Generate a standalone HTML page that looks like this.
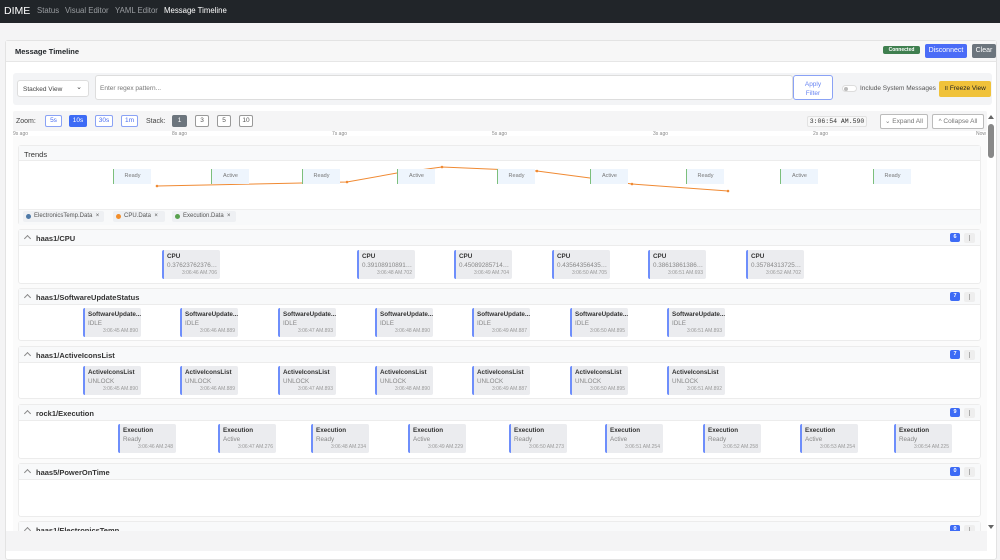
<!DOCTYPE html>
<html><head><meta charset="utf-8"><style>
*{box-sizing:border-box;margin:0;padding:0}
body{width:1000px;height:551px;overflow:hidden;background:#f4f4f5;font-family:"Liberation Sans",sans-serif;position:relative;color:#212529}
.a{position:absolute}
.nav{left:0;top:0;width:1000px;height:23px;background:#212529}
.nav span{position:absolute;top:6px;font-size:7.8px;color:#9a9da1;white-space:nowrap}
.card{left:5px;top:40px;width:992px;height:520px;background:#fff;border:1px solid #e3e3e3;border-radius:3px}
.btn{position:absolute;font-size:6.5px;border-radius:2px;text-align:center;white-space:nowrap}
.zb{height:12px;top:115px;border:1px solid #8aa2f5;color:#4a6cf0;line-height:10px;background:#fff}
.sb{height:12px;top:115px;border:1px solid #999;color:#555;line-height:10px;background:#fff}
.lbl{font-size:5px;color:#888;top:131px}
.sec{left:18px;width:963px;border:1px solid #ececec;border-radius:3px;background:#fff}
.sh{position:absolute;left:0;top:0;width:100%;height:16px;background:#f8f9fa;border-bottom:1px solid #ececec}
.sh b{position:absolute;left:17px;top:4px;font-size:7.5px;color:#333;font-weight:bold;white-space:nowrap}
.sh i{position:absolute;left:6px;top:6px;width:5px;height:5px;border-left:1px solid #888;border-top:1px solid #888;transform:rotate(45deg)}
.bd{position:absolute;right:20px;top:3px;width:10px;height:9px;background:#3d6bf5;border-radius:2px;color:#fff;font-size:5.5px;text-align:center;line-height:9px;font-weight:bold}
.mn{position:absolute;right:5px;top:3px;width:11px;height:10px;background:#eee;border-radius:2px}
.mn:after{content:"";position:absolute;left:5px;top:2px;width:1px;height:6px;background:#aaa}
.m{position:absolute;width:58px;height:29px;background:#ebecef;border-left:2px solid #6e8efb;border-radius:2px;font-size:6.3px;white-space:nowrap;overflow:hidden}
.m b{position:absolute;left:3px;top:3px;color:#333}
.m u{position:absolute;left:3px;top:12px;width:51px;overflow:hidden;text-overflow:ellipsis;color:#888;text-decoration:none}
.m s{position:absolute;right:3px;top:20px;color:#999;text-decoration:none;font-size:5px}
.tb{position:absolute;top:169px;width:38px;height:15px;background:#eef5fd;border-left:1px solid #7cbf7c;font-size:5.5px;color:#777;text-align:center;line-height:15px}
.chip{position:absolute;top:211px;height:11px;background:#eef0f3;border-radius:2px;font-size:6px;color:#555;line-height:11px;padding-left:11px;white-space:nowrap}
</style></head><body>
<div class="a nav"><span style="left:4px;top:5px;font-size:10.5px;color:#fff">DIME</span><span style="left:37px">Status</span><span style="left:65px">Visual Editor</span><span style="left:115px">YAML Editor</span><span style="left:164px;color:#fff">Message Timeline</span></div>
<div class="a card"></div>
<div class="a" style="left:6px;top:41px;width:990px;height:21px;background:#f7f7f7;border-bottom:1px solid #e6e6e6"></div>
<div class="a" style="left:15px;top:47px;font-size:7.5px;font-weight:bold">Message Timeline</div>
<div class="a" style="left:883px;top:46px;width:37px;height:8px;background:#3f7f4f;border-radius:2px;color:#fff;font-size:5px;font-weight:bold;text-align:center;line-height:8px">Connected</div>
<div class="btn" style="left:925px;top:44px;width:42px;height:14px;background:#4a6cf7;color:#fff;line-height:14px;font-size:7px">Disconnect</div>
<div class="btn" style="left:972px;top:44px;width:24px;height:14px;background:#6c757d;color:#fff;line-height:14px;font-size:7px">Clear</div>
<div class="a" style="left:13px;top:73px;width:979px;height:32px;background:#f3f4f6;border-radius:3px"></div>
<div class="a" style="left:17px;top:80px;width:72px;height:17px;background:#fff;border:1px solid #ddd;border-radius:3px;font-size:6.5px;padding:5px 0 0 5px;color:#444">Stacked View<span style="position:absolute;right:6px;top:2px;font-size:7px">⌄</span></div>
<div class="a" style="left:95px;top:75px;width:698px;height:25px;background:#fff;border:1px solid #ddd;border-radius:3px;font-size:6.5px;color:#777;padding:9px 0 0 4px">Enter regex pattern...</div>
<div class="a" style="left:793px;top:75px;width:40px;height:25px;background:#fff;border:1px solid #8aa2f5;border-radius:3px;font-size:6.5px;color:#6a86f2;text-align:center;padding-top:4px;line-height:9px">Apply<br>Filter</div>
<div class="a" style="left:842px;top:85px;width:15px;height:7px;border:1px solid #ddd;border-radius:4px;background:#fff"><div style="position:absolute;left:1px;top:1px;width:4px;height:4px;border-radius:50%;background:#bbb"></div></div>
<div class="a" style="left:860px;top:85px;font-size:6.5px;color:#555">Include System Messages</div>
<div class="btn" style="left:939px;top:81px;width:52px;height:16px;background:#f0c23a;color:#222;line-height:16px;font-size:6.5px">॥ Freeze View</div>
<div class="a" style="left:13px;top:111px;width:974px;height:20px;background:#f5f5f6;border-radius:2px"></div>
<div class="a" style="left:16px;top:118px;font-size:7px;color:#444">Zoom:</div>
<div class="btn zb" style="left:45px;width:17px">5s</div>
<div class="btn zb" style="left:69px;width:18px;background:#3d6bf5;color:#fff;border-color:#3d6bf5">10s</div>
<div class="btn zb" style="left:95px;width:18px">30s</div>
<div class="btn zb" style="left:121px;width:17px">1m</div>
<div class="a" style="left:146px;top:118px;font-size:7px;color:#444">Stack:</div>
<div class="btn sb" style="left:172px;width:15px;background:#6c757d;color:#fff;border-color:#6c757d">1</div>
<div class="btn sb" style="left:195px;width:14px">3</div>
<div class="btn sb" style="left:217px;width:14px">5</div>
<div class="btn sb" style="left:239px;width:14px">10</div>
<div class="a" style="left:807px;top:116px;width:60px;height:11px;background:#f8f8f8;border:1px solid #e2e2e2;border-radius:2px;font-family:'Liberation Mono',monospace;font-size:6.5px;text-align:center;line-height:10px;color:#333">3:06:54 AM.590</div>
<div class="btn sb" style="left:880px;top:114px;width:48px;height:15px;line-height:13px;color:#777;border-color:#bbb">⌄ Expand All</div>
<div class="btn sb" style="left:932px;top:114px;width:52px;height:15px;line-height:13px;color:#777;border-color:#bbb">^ Collapse All</div>
<div class="a" style="left:988px;top:115px;width:0;height:0;border-left:3px solid transparent;border-right:3px solid transparent;border-bottom:4px solid #666"></div>
<div class="a" style="left:988px;top:124px;width:6px;height:34px;background:#888;border-radius:3px"></div>
<div class="a" style="left:988px;top:525px;width:0;height:0;border-left:3px solid transparent;border-right:3px solid transparent;border-top:4px solid #666"></div>
<div class="a lbl" style="left:13px">9s ago</div><div class="a lbl" style="left:172px">8s ago</div><div class="a lbl" style="left:332px">7s ago</div><div class="a lbl" style="left:492px">5s ago</div><div class="a lbl" style="left:653px">3s ago</div><div class="a lbl" style="left:813px">2s ago</div><div class="a lbl" style="left:976px">Now</div>
<div class="a" style="left:13px;top:136px;width:974px;height:395px;background:#fbfbfb"></div>

<div class="a sec" style="top:145px;height:80px"><div class="sh" style="height:15px"><b style="left:5px;font-weight:normal;color:#333">Trends</b></div>
<div style="position:absolute;left:0;top:63px;width:100%;height:16px;background:#f8f9fa;border-top:1px solid #eee"></div></div>
<svg class="a" style="left:0;top:0" width="1000" height="230"><polyline points="157,186 302,183 347,182 397,173 442,167 537,171 590,178 632,184 728,191" fill="none" stroke="#f08a33" stroke-width="1"/><g fill="#f08a33"><circle cx="157" cy="186" r="1.3"/><circle cx="347" cy="182" r="1.3"/><circle cx="442" cy="167" r="1.3"/><circle cx="537" cy="171" r="1.3"/><circle cx="632" cy="184" r="1.3"/><circle cx="728" cy="191" r="1.3"/></g></svg>
<div class="tb" style="left:113px">Ready</div><div class="tb" style="left:211px">Active</div><div class="tb" style="left:302px">Ready</div><div class="tb" style="left:397px">Active</div><div class="tb" style="left:497px">Ready</div><div class="tb" style="left:590px">Active</div><div class="tb" style="left:686px">Ready</div><div class="tb" style="left:780px">Active</div><div class="tb" style="left:873px">Ready</div>
<div class="chip" style="left:23px;width:81px">ElectronicsTemp.Data&nbsp; ×</div>
<div class="chip" style="left:113px;width:52px">CPU.Data&nbsp; ×</div>
<div class="chip" style="left:172px;width:64px">Execution.Data&nbsp; ×</div>
<div class="a" style="left:26px;top:214px;width:5px;height:5px;border-radius:50%;background:#4e79a7"></div>
<div class="a" style="left:116px;top:214px;width:5px;height:5px;border-radius:50%;background:#f28e2b"></div>
<div class="a" style="left:175px;top:214px;width:5px;height:5px;border-radius:50%;background:#59a14f"></div>

<div class="a sec" style="top:229px;height:55px"><div class="sh"><i></i><b>haas1/CPU</b><div class="bd">6</div><div class="mn"></div></div></div>
<div class="a sec" style="top:288px;height:53px"><div class="sh"><i></i><b>haas1/SoftwareUpdateStatus</b><div class="bd">7</div><div class="mn"></div></div></div>
<div class="a sec" style="top:346px;height:53px"><div class="sh"><i></i><b>haas1/ActiveIconsList</b><div class="bd">7</div><div class="mn"></div></div></div>
<div class="a sec" style="top:404px;height:55px"><div class="sh"><i></i><b>rock1/Execution</b><div class="bd">9</div><div class="mn"></div></div></div>
<div class="a sec" style="top:463px;height:54px"><div class="sh"><i></i><b>haas5/PowerOnTime</b><div class="bd">0</div><div class="mn"></div></div></div>
<div class="a" style="left:18px;top:521px;width:963px;height:10px;overflow:hidden"><div class="sec" style="position:absolute;left:0;top:0;width:963px;height:30px;border:1px solid #ececec"><div class="sh"><i></i><b>haas1/ElectronicsTemp</b><div class="bd">0</div><div class="mn"></div></div></div></div>
<div class="a" style="left:6px;top:531px;width:981px;height:20px;background:#f4f4f5"></div>

<div class="m" style="left:162px;top:250px"><b>CPU</b><u>0.376237623762376</u><s>3:06:46 AM.706</s></div>
<div class="m" style="left:357px;top:250px"><b>CPU</b><u>0.391089108910891</u><s>3:06:48 AM.702</s></div>
<div class="m" style="left:454px;top:250px"><b>CPU</b><u>0.450892857142857</u><s>3:06:49 AM.704</s></div>
<div class="m" style="left:552px;top:250px"><b>CPU</b><u>0.435643564356435</u><s>3:06:50 AM.705</s></div>
<div class="m" style="left:648px;top:250px"><b>CPU</b><u>0.386138613861386</u><s>3:06:51 AM.693</s></div>
<div class="m" style="left:746px;top:250px"><b>CPU</b><u>0.357843137254901</u><s>3:06:52 AM.702</s></div>

<div class="m" style="left:83px;top:308px"><b>SoftwareUpdate...</b><u>IDLE</u><s>3:06:45 AM.890</s></div>
<div class="m" style="left:180px;top:308px"><b>SoftwareUpdate...</b><u>IDLE</u><s>3:06:46 AM.889</s></div>
<div class="m" style="left:278px;top:308px"><b>SoftwareUpdate...</b><u>IDLE</u><s>3:06:47 AM.893</s></div>
<div class="m" style="left:375px;top:308px"><b>SoftwareUpdate...</b><u>IDLE</u><s>3:06:48 AM.890</s></div>
<div class="m" style="left:472px;top:308px"><b>SoftwareUpdate...</b><u>IDLE</u><s>3:06:49 AM.887</s></div>
<div class="m" style="left:570px;top:308px"><b>SoftwareUpdate...</b><u>IDLE</u><s>3:06:50 AM.895</s></div>
<div class="m" style="left:667px;top:308px"><b>SoftwareUpdate...</b><u>IDLE</u><s>3:06:51 AM.893</s></div>

<div class="m" style="left:83px;top:366px"><b>ActiveIconsList</b><u>UNLOCK</u><s>3:06:45 AM.890</s></div>
<div class="m" style="left:180px;top:366px"><b>ActiveIconsList</b><u>UNLOCK</u><s>3:06:46 AM.889</s></div>
<div class="m" style="left:278px;top:366px"><b>ActiveIconsList</b><u>UNLOCK</u><s>3:06:47 AM.893</s></div>
<div class="m" style="left:375px;top:366px"><b>ActiveIconsList</b><u>UNLOCK</u><s>3:06:48 AM.890</s></div>
<div class="m" style="left:472px;top:366px"><b>ActiveIconsList</b><u>UNLOCK</u><s>3:06:49 AM.887</s></div>
<div class="m" style="left:570px;top:366px"><b>ActiveIconsList</b><u>UNLOCK</u><s>3:06:50 AM.895</s></div>
<div class="m" style="left:667px;top:366px"><b>ActiveIconsList</b><u>UNLOCK</u><s>3:06:51 AM.892</s></div>

<div class="m" style="left:118px;top:424px"><b>Execution</b><u>Ready</u><s>3:06:46 AM.248</s></div>
<div class="m" style="left:218px;top:424px"><b>Execution</b><u>Active</u><s>3:06:47 AM.276</s></div>
<div class="m" style="left:311px;top:424px"><b>Execution</b><u>Ready</u><s>3:06:48 AM.234</s></div>
<div class="m" style="left:408px;top:424px"><b>Execution</b><u>Active</u><s>3:06:49 AM.229</s></div>
<div class="m" style="left:509px;top:424px"><b>Execution</b><u>Ready</u><s>3:06:50 AM.273</s></div>
<div class="m" style="left:605px;top:424px"><b>Execution</b><u>Active</u><s>3:06:51 AM.254</s></div>
<div class="m" style="left:703px;top:424px"><b>Execution</b><u>Ready</u><s>3:06:52 AM.258</s></div>
<div class="m" style="left:800px;top:424px"><b>Execution</b><u>Active</u><s>3:06:53 AM.254</s></div>
<div class="m" style="left:894px;top:424px"><b>Execution</b><u>Ready</u><s>3:06:54 AM.225</s></div>
</body></html>
